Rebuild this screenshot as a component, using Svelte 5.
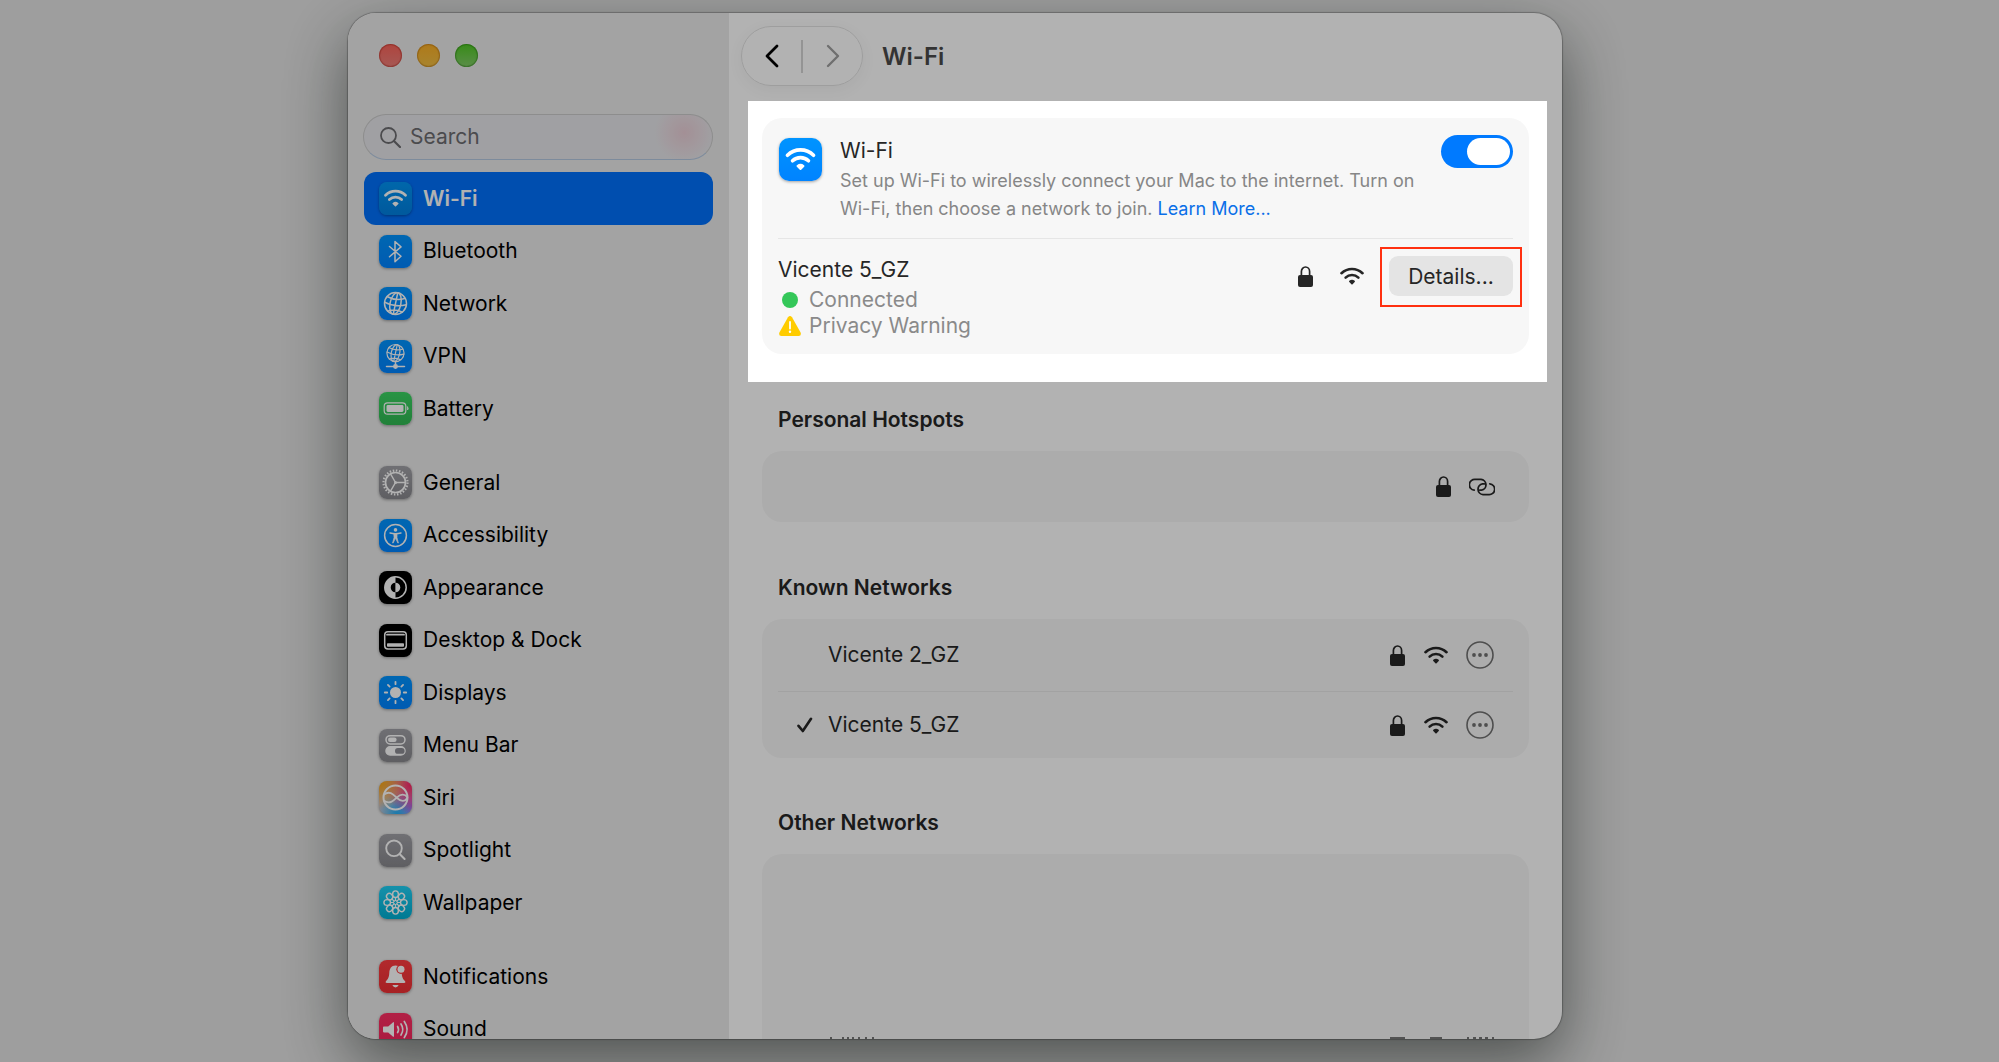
<script>
  let query = '';
  let wifiOn = true;
  let current = 'Wi-Fi';

  const groups = [
    [
      { name: 'Wi-Fi', icon: 'wifi', tint: 'blue' },
      { name: 'Bluetooth', icon: 'bluetooth', tint: 'blue' },
      { name: 'Network', icon: 'network', tint: 'blue' },
      { name: 'VPN', icon: 'vpn', tint: 'blue' },
      { name: 'Battery', icon: 'battery', tint: 'green' }
    ],
    [
      { name: 'General', icon: 'general', tint: 'gray' },
      { name: 'Accessibility', icon: 'accessibility', tint: 'blue' },
      { name: 'Appearance', icon: 'appearance', tint: 'black' },
      { name: 'Desktop & Dock', icon: 'dock', tint: 'black' },
      { name: 'Displays', icon: 'displays', tint: 'blue' },
      { name: 'Menu Bar', icon: 'menubar', tint: 'gray' },
      { name: 'Siri', icon: 'siri', tint: 'siri' },
      { name: 'Spotlight', icon: 'spotlight', tint: 'gray' },
      { name: 'Wallpaper', icon: 'wallpaper', tint: 'cyan' }
    ],
    [
      { name: 'Notifications', icon: 'notifications', tint: 'red' },
      { name: 'Sound', icon: 'sound', tint: 'pink' }
    ]
  ];

  const known = [
    { name: 'Vicente 2_GZ', joined: false },
    { name: 'Vicente 5_GZ', joined: true }
  ];

  const petals = [0, 45, 90, 135, 180, 225, 270, 315];
</script>

{#snippet lock()}
  <svg class="lock" viewBox="0 0 15 21" aria-hidden="true">
    <path d="M3.4 10V5.6a4.1 4.6 0 0 1 8.2 0V10" fill="none" stroke="currentColor" stroke-width="1.7" />
    <rect y="9" width="15" height="12" rx="2" fill="currentColor" />
  </svg>
{/snippet}

{#snippet waves()}
  <svg class="waves" viewBox="0 0 24 18" aria-hidden="true">
    <g fill="none" stroke="currentColor" stroke-width="2.6" stroke-linecap="round">
      <path d="M1.5 6.2a15.2 15.2 0 0 1 21 0" />
      <path d="M5.6 10.6a9.2 9.2 0 0 1 12.8 0" />
    </g>
    <path d="M9.3 13.8a4.2 4.2 0 0 1 5.4 0q.6.6 0 1.2L12.6 17.2q-.6.5-1.2 0L9.3 15q-.6-.6 0-1.2z" fill="currentColor" />
  </svg>
{/snippet}

{#snippet globe()}
  <circle cx="16.5" cy="16.5" r="11" />
  <ellipse cx="16.5" cy="16.5" rx="5.4" ry="11" transform="rotate(12 16.5 16.5)" />
  <path d="M18.8 5.7 14.2 27.3M5.6 15.2q10.5 5.6 21.8 2.6M8 9.5q8 4.6 17.8 2.1M8.6 24.2q7-3 14.8 1" />
{/snippet}

{#snippet glyph(icon)}
  <svg viewBox="0 0 33 33" fill="none" stroke="#fff" stroke-width="1.5" stroke-linecap="round" stroke-linejoin="round" aria-hidden="true">
    {#if icon === 'wifi'}
      <path d="M6.5 13.2a14.3 14.3 0 0 1 20 0M10.4 17.5a8.8 8.8 0 0 1 12.2 0" stroke-width="2.8" />
      <path d="M14.2 21.5a3.8 3.8 0 0 1 4.6 0L16.5 23.8z" fill="#fff" />
    {:else if icon === 'bluetooth'}
      <path d="M10.5 11.5 22 21.3l-6 5.400V6.500l6 5.400-11.500 9.800" />
    {:else if icon === 'network'}
      {@render globe()}
    {:else if icon === 'vpn'}
      <g transform="translate(3.6 .2) scale(.78)">{@render globe()}</g>
      <path d="M16.5 22v4M7.5 26.5h18" />
      <circle cx="16.5" cy="26.5" r="1.7" fill="#fff" />
    {:else if icon === 'battery'}
      <rect x="5.2" y="10.8" width="21.6" height="11.4" rx="3.4" stroke-width="1.2" />
      <rect x="7.5" y="13" width="17" height="7" rx="1.4" fill="#fff" stroke="none" />
      <path d="M28.6 15v3q1.2-1.5 0-3z" fill="#fff" stroke-width=".8" />
    {:else if icon === 'general'}
      <circle cx="16.5" cy="16.5" r="12" stroke-width="2.2" stroke-dasharray="1.5 1.641" stroke-linecap="butt" />
      <circle cx="16.5" cy="16.5" r="10" stroke-width="1.7" />
      <path d="M16.5 16.5h9.8M16.5 16.5 11.6 8M16.5 16.5 11.6 25" />
      <circle cx="16.5" cy="16.5" r="1.5" fill="#fff" stroke="none" />
    {:else if icon === 'accessibility'}
      <circle cx="16.5" cy="16.5" r="10.9" />
      <circle cx="16.5" cy="10.9" r="1.8" fill="#fff" stroke="none" />
      <path d="M11 14q2.700.8 5.500.8T22 14" stroke-width="1.4" />
      <path d="M15 14.500h3v4.200l1.400 5.300-.5.100-2.400-5-2.400 5-.5-.1L15 18.700z" fill="#fff" stroke-width=".7" />
    {:else if icon === 'appearance'}
      <circle cx="16.5" cy="16.5" r="10.7" />
      <path d="M16.5 5.8a10.7 10.7 0 0 0 0 21.4z" fill="#fff" stroke="none" />
      <path d="M16.5 11.7a4.8 4.8 0 0 0 0 9.6z" fill="#000" stroke="none" />
      <path d="M16.5 11.7a4.8 4.8 0 0 1 0 9.6z" fill="#fff" stroke="none" />
    {:else if icon === 'dock'}
      <rect x="5.7" y="7.7" width="21.6" height="17.2" rx="3.2" />
      <path d="M8 10.7h17" stroke-width="1.8" />
      <rect x="8" y="19.2" width="17" height="3.6" rx=".8" fill="#fff" stroke="none" />
    {:else if icon === 'displays'}
      <circle cx="16.5" cy="16.5" r="5.5" fill="#fff" stroke="none" />
      {#each petals as deg}
        <path d="M16.5 8.2V5.8" stroke-width="1.8" transform="rotate({deg} 16.5 16.5)" />
      {/each}
    {:else if icon === 'menubar'}
      <rect x="7" y="6.7" width="19" height="8.2" rx="4.1" />
      <rect x="9" y="8.6" width="8.6" height="4.4" rx="2.2" fill="#fff" stroke="none" />
      <rect x="7" y="17.8" width="19" height="8.2" rx="4.1" fill="#fff" />
      <rect x="16" y="19" width="9.6" height="5.8" rx="2.9" fill="#8c8c92" stroke="none" />
    {:else if icon === 'siri'}
      <circle cx="16.5" cy="16.5" r="12" stroke-width="2" />
      <path d="M5 13.5c6-4.5 10 .8 13 3.5 4 3.7 8 4 10 .2M5 19.8c6 4 10-.6 13-3.5 4-3.7 8-3.3 10.3 0" stroke-width="1.8" />
    {:else if icon === 'spotlight'}
      <circle cx="15" cy="14.3" r="7.8" stroke-width="1.9" />
      <path d="M20.6 20l5 5" stroke-width="2.1" />
    {:else if icon === 'wallpaper'}
      {#each petals as deg}
        <ellipse cx="16.5" cy="8.2" rx="2.9" ry="3.3" stroke-width="1.4" transform="rotate({deg} 16.5 16.5)" />
        <path d="M16.5 11.5v3" stroke-width="1.2" transform="rotate({deg} 16.5 16.5)" />
      {/each}
      <circle cx="16.5" cy="16.5" r="2" stroke-width="1" />
    {:else if icon === 'notifications'}
      <path d="M16.5 5.5c-4.2 0-6 3.2-6.2 7.2-.2 4.5-1.2 6.300-3.200 8.300-.9 1-.5 2 .8 2h17.200c1.300 0 1.700-1 .8-2-2-2-3-3.800-3.200-8.300-.2-4-2-7.200-6.200-7.200z" fill="#fff" stroke="none" />
      <path d="M13.3 25h6.4q-1.2 2.4-3.2 2.4t-3.200-2.4z" fill="#fff" stroke="none" />
      <circle cx="22" cy="9.3" r="4.7" fill="#ff383c" stroke="none" />
      <circle cx="22" cy="9.3" r="3.5" fill="#fff" stroke="none" />
    {:else}
      <path d="M4.8 13.600h4.400l4.600-4.200q1.200-.8 1.200.5v13.200q0 1.300-1.200.5l-4.600-4.200H4.800q-.8 0-.8-.8v-4.200q0-.8.8-.8z" fill="#fff" stroke="none" />
      <path d="M18.600 13.500q1.800 3 0 6M22 11q3.600 5.500 0 11M25.300 8.500q5.600 8 0 16" stroke-width="1.7" />
    {/if}
  </svg>
{/snippet}

<div class="desktop">
  <div class="window">
    <aside>
      <div class="lights">
        <button type="button" class="close" aria-label="Close"></button>
        <button type="button" class="minimize" aria-label="Minimize"></button>
        <button type="button" class="zoom" aria-label="Zoom"></button>
      </div>
      <label class="search">
        <svg viewBox="0 0 21 21" fill="none" stroke="currentColor" stroke-linecap="round" aria-hidden="true">
          <circle cx="8.5" cy="8.5" r="7.5" stroke-width="1.8" />
          <path d="M14 14l6 6" stroke-width="2.2" />
        </svg>
        <input type="text" placeholder="Search" aria-label="Search" bind:value={query} />
      </label>
      <nav>
        {#each groups as group}
          <ul>
            {#each group as item}
              <li>
                <a href="#{item.icon}" class:active={item.name === current} on:click={() => (current = item.name)}>
                  <span class="tile {item.tint}">{@render glyph(item.icon)}</span>
                  {item.name}
                </a>
              </li>
            {/each}
          </ul>
        {/each}
      </nav>
    </aside>

    <main>
      <header>
        <div class="history">
          <button type="button" aria-label="Back">
            <svg viewBox="0 0 14 24" fill="none" stroke="currentColor" stroke-width="2.8" stroke-linecap="round" stroke-linejoin="round"><path d="M12 2 2 12l10 10" /></svg>
          </button>
          <button type="button" aria-label="Forward" disabled>
            <svg viewBox="0 0 14 24" fill="none" stroke="currentColor" stroke-width="2.4" stroke-linecap="round" stroke-linejoin="round"><path d="M2 2l10 10L2 22" /></svg>
          </button>
        </div>
        <h1>Wi-Fi</h1>
      </header>

      <section class="spotlit">
        <div class="card">
          <div class="intro">
            <span class="tile blue large">{@render glyph('wifi')}</span>
            <div class="about">
              <label for="wifi-switch">Wi-Fi</label>
              <p>
                Set up Wi-Fi to wirelessly connect your Mac to the internet. Turn on<br />
                Wi-Fi, then choose a network to join. <a href="#learn">Learn More...</a>
              </p>
            </div>
            <input id="wifi-switch" class="switch" type="checkbox" role="switch" bind:checked={wifiOn} />
          </div>
          <div class="joined">
            <div class="status">
              <strong>Vicente 5_GZ</strong>
              <span><i class="dot"></i>Connected</span>
              <span>
                <svg viewBox="0 0 22 20" aria-hidden="true">
                  <path d="M9 1.3q2-2.4 4 0l8.600 15.200q1 3.100-2 3.500H2.400q-3-.4-2-3.500z" fill="#fc0" />
                  <path d="M11 6v6.500" stroke="#fff" stroke-width="1.8" stroke-linecap="round" />
                  <circle cx="11" cy="15.7" r="1.2" fill="#fff" />
                </svg>
                Privacy Warning
              </span>
            </div>
            {@render lock()}
            {@render waves()}
            <div class="callout">
              <button type="button">Details...</button>
            </div>
          </div>
        </div>
      </section>

      <section>
        <h2>Personal Hotspots</h2>
        <div class="card hotspot">
          {@render lock()}
          <svg class="link" viewBox="0 0 26 18" fill="none" stroke="currentColor" stroke-width="1.8" stroke-linecap="round" aria-hidden="true">
            <path d="M5.2 12.2A5.4 5.4 0 0 1 6.3 1.4H12a5.400 5.400 0 0 1 .5 10.700h-1.800" />
            <path d="M20.8 5.8a5.4 5.4 0 0 1-1.1 10.8H14a5.400 5.400 0 0 1-.5-10.700h1.800" />
          </svg>
        </div>
      </section>

      <section>
        <h2>Known Networks</h2>
        <ul class="card">
          {#each known as network}
            <li>
              <span class="check">
                {#if network.joined}
                  <svg viewBox="0 0 16 16" fill="none" stroke="currentColor" stroke-width="2.6" stroke-linecap="round" stroke-linejoin="round" aria-label="Joined"><path d="M1.5 8.8 5.8 14 14 1.8" /></svg>
                {/if}
              </span>
              <span class="name">{network.name}</span>
              {@render lock()}
              {@render waves()}
              <button type="button" class="more" aria-label="More options for {network.name}">
                <svg viewBox="0 0 28 28" fill="currentColor">
                  <circle cx="14" cy="14" r="13" fill="none" stroke="currentColor" stroke-width="1.6" />
                  <circle cx="8" cy="14" r="1.9" />
                  <circle cx="14" cy="14" r="1.9" />
                  <circle cx="20" cy="14" r="1.9" />
                </svg>
              </button>
            </li>
          {/each}
        </ul>
      </section>

      <section class="others">
        <h2>Other Networks</h2>
        <!-- only the tops of the next row show above the window edge -->
        <div class="card">
          <svg viewBox="0 0 47 2" width="47" height="2" fill="#777" aria-hidden="true">
            <path d="M1 0h2v2H1zM13 0h2v2h-2zM18 0h2v2h-2zM23 0h2v2h-2zM29 0h2v2h-2zM36 0h2v2h-2zM43 0h2v2h-2z" />
          </svg>
          <svg viewBox="0 0 105 2" width="105" height="2" fill="#777" aria-hidden="true">
            <path d="M0 0h15v2H0zM40 0h12v2H40zM77 0h2v2h-2zM83 0h3v2h-3zM89 0h3v2h-3zM95 0h3v2h-3zM102 0h2v2h-2z" />
          </svg>
        </div>
      </section>
    </main>
  </div>
  <div class="shade"></div>
</div>

<style>
  :global(body) {
    margin: 0;
    background: #e3e3e3;
  }
  .desktop {
    box-sizing: border-box;
    height: 100vh;
    padding: 13px 437px 23px 348px;
    overflow: hidden;
    font-family: Inter, 'Noto Sans', sans-serif;
    font-size: 21px;
    line-height: 26px;
    color: #262626;
  }
  .shade {
    position: fixed;
    inset: 0;
    z-index: 1;
    background: rgba(0, 0, 0, 0.3);
    pointer-events: none;
  }
  .window {
    display: flex;
    height: 100%;
    border-radius: 28px;
    overflow: hidden;
    background: #fff;
    box-shadow: 0 0 1px 1px rgba(0, 0, 0, 0.25), 0 24px 64px rgba(10, 20, 14, 0.52);
  }
  button,
  input {
    padding: 0;
    border: 0;
    background: none;
    font: inherit;
    color: inherit;
  }
  ul {
    margin: 0;
    padding: 0;
    list-style: none;
  }
  svg {
    display: block;
    flex: none;
  }

  aside {
    box-sizing: border-box;
    flex: none;
    width: 381px;
    padding: 31px 16px 0 15px;
    background: #eaeaea;
  }
  .lights {
    display: flex;
    gap: 15px;
    padding-left: 16px;
  }
  .lights button {
    width: 23px;
    height: 23px;
    border-radius: 50%;
  }
  .close {
    background: linear-gradient(#fa6259, #ee7f79);
    box-shadow: inset 0 0 1px 1px rgba(150, 20, 10, 0.4);
  }
  .minimize {
    background: linear-gradient(#fbaf25, #f0be44);
    box-shadow: inset 0 0 1px 1px rgba(150, 80, 0, 0.4);
  }
  .zoom {
    background: linear-gradient(#4fc823, #83cc69);
    box-shadow: inset 0 0 1px 1px rgba(20, 100, 0, 0.4);
  }
  .search {
    display: flex;
    align-items: center;
    gap: 9px;
    box-sizing: border-box;
    height: 46px;
    margin: 47px 0 12px;
    padding: 0 16px;
    border: 1px solid #cacaca;
    border-bottom-color: #b4c8e0;
    border-radius: 23px;
    background: radial-gradient(circle at 92% 40%, rgba(236, 196, 206, 0.7), transparent 30px), #e6e6ea;
    color: #6c6c70;
  }
  .search svg {
    width: 21px;
    height: 21px;
  }
  .search input {
    width: 100%;
    min-width: 0;
    outline: none;
  }
  .search input::placeholder {
    color: #6c6c70;
    opacity: 1;
  }
  nav {
    display: flex;
    flex-direction: column;
    gap: 21px;
  }
  nav a {
    display: flex;
    align-items: center;
    gap: 11px;
    height: 52px;
    margin-left: 1px;
    padding-left: 15px;
    border-radius: 12px;
    color: #000;
    text-decoration: none;
  }
  nav li:nth-child(odd) a {
    height: 53px;
  }
  nav a.active {
    background: #0070fb;
    color: #fff;
    font-weight: 600;
  }
  .tile {
    flex: none;
    width: 33px;
    height: 33px;
    border-radius: 8px;
    box-shadow: 0 1px 3px rgba(0, 0, 0, 0.35);
  }
  .large {
    width: 43px;
    height: 43px;
    border-radius: 10px;
  }
  .blue {
    background: linear-gradient(#0094ff, #0083ff);
  }
  nav .active .tile {
    background: linear-gradient(#0094f5, #0080e0);
  }
  .green {
    background: linear-gradient(#3bd463, #30b852);
  }
  .gray {
    background: linear-gradient(#a0a0a6, #88888d);
  }
  .black {
    background: #000;
  }
  .cyan {
    background: linear-gradient(#1fd0f5, #00aed2);
  }
  .red {
    background: linear-gradient(#ff3c40, #ee3034);
  }
  .pink {
    background: linear-gradient(#ff2f64, #f4265c);
  }
  .siri {
    background: radial-gradient(circle at 0 0, #ffa000, transparent 60%),
      radial-gradient(circle at 100% 10%, #ff2060, transparent 65%),
      radial-gradient(circle at 55% 100%, #20b0f8, transparent 55%),
      radial-gradient(circle at 100% 80%, #c060ff, transparent 50%), #cfc4cc;
  }

  main {
    display: flex;
    flex: 1;
    flex-direction: column;
    min-width: 0;
    padding: 0 15px 0 19px;
  }
  header {
    display: flex;
    align-items: center;
    gap: 19px;
    margin: 13px 0 15px -7px;
  }
  .history {
    display: flex;
    align-items: center;
    box-sizing: border-box;
    width: 122px;
    height: 60px;
    border: 1px solid #e2e2e2;
    border-radius: 30px;
    box-shadow: 0 4px 16px rgba(0, 0, 0, 0.05);
  }
  .history button {
    display: flex;
    flex: 1;
    align-items: center;
    justify-content: center;
    height: 33px;
    color: #000;
  }
  .history button + button {
    border-left: 2px solid #d4d4d4;
    color: #a0a0a0;
  }
  .history svg {
    width: 14px;
    height: 24px;
  }
  h1 {
    margin: 0;
    padding-top: 1px;
    font-size: 24px;
    font-weight: 600;
    color: #4a4a4a;
  }
  section {
    padding: 0 18px 0 14px;
  }
  section + section {
    margin-top: 53px;
  }
  .spotlit {
    position: relative;
    z-index: 2;
    padding: 17px 18px 28px 14px;
    background: #fff;
  }
  .spotlit + section {
    margin-top: 25px;
  }
  h2 {
    margin: 0 0 18px 16px;
    font-size: 21px;
    font-weight: 600;
    line-height: 26px;
  }
  .card {
    padding: 0 16px;
    border-radius: 20px;
    background: #f7f7f7;
  }
  .lock {
    width: 15px;
    height: 21px;
  }
  .waves {
    width: 24px;
    height: 18px;
  }

  .intro {
    display: flex;
    gap: 18px;
    box-sizing: border-box;
    min-height: 121px;
    padding: 20px 0 0 1px;
    border-bottom: 1px solid #e6e6e6;
  }
  .about {
    flex: 1;
    min-width: 0;
  }
  .about label {
    display: block;
  }
  .about p {
    margin: 3px 0 0;
    font-size: 18px;
    line-height: 28px;
    color: #868686;
  }
  .about a {
    color: #0a6fe8;
    text-decoration: none;
  }
  .switch {
    appearance: none;
    box-sizing: border-box;
    flex: none;
    width: 72px;
    height: 33px;
    margin: -3px 0 0;
    padding: 3px;
    border-radius: 17px;
    background: #c8c8c8;
  }
  .switch::before {
    content: '';
    display: block;
    width: 43px;
    height: 27px;
    border-radius: 14px;
    background: #fff;
  }
  .switch:checked {
    background: #007aff;
  }
  .switch:checked::before {
    margin-left: auto;
  }
  .joined {
    display: flex;
    align-items: flex-start;
    min-height: 115px;
  }
  .status {
    display: flex;
    flex: 1;
    flex-direction: column;
    padding-top: 18px;
  }
  .status strong {
    margin-bottom: 4px;
    font-weight: 400;
  }
  .status span {
    display: flex;
    align-items: center;
    gap: 7px;
    color: #8a8a8a;
  }
  .status svg {
    width: 24px;
    height: 20px;
  }
  .dot {
    width: 16px;
    height: 16px;
    margin: 0 4px;
    border-radius: 50%;
    background: #34c759;
  }
  .joined .lock {
    margin: 27px 27px 0 0;
  }
  .joined .waves {
    margin: 28px 16px 0 0;
  }
  .callout {
    margin: 8px -9px 0 0;
    padding: 7px;
    border: 2px solid #ff3010;
  }
  .callout button {
    display: block;
    width: 124px;
    height: 40px;
    margin-bottom: 2px;
    padding-top: 1px;
    border-radius: 9px;
    background: #e4e4e4;
  }

  .hotspot {
    display: flex;
    align-items: center;
    justify-content: flex-end;
    gap: 18px;
    min-height: 71px;
    padding-right: 34px;
  }
  .link {
    width: 26px;
    height: 18px;
  }
  ul.card li {
    display: flex;
    align-items: center;
    min-height: 72px;
    padding-right: 19px;
  }
  ul.card li + li {
    min-height: 66px;
    border-top: 1px solid #e9e9e9;
  }
  .check {
    width: 31px;
    padding-left: 19px;
  }
  .check svg {
    width: 16px;
    height: 16px;
  }
  .name {
    flex: 1;
  }
  ul.card .lock {
    margin-right: 19px;
  }
  ul.card .waves {
    margin-right: 18px;
  }
  .more {
    width: 28px;
    height: 28px;
    color: #707070;
  }
  section.others {
    display: flex;
    flex: 1;
    flex-direction: column;
    margin-top: 52px;
  }
  .others .card {
    display: flex;
    flex: 1;
    align-items: flex-end;
    justify-content: space-between;
    padding: 0 34px 0 67px;
    border-radius: 20px 20px 0 0;
  }
</style>
